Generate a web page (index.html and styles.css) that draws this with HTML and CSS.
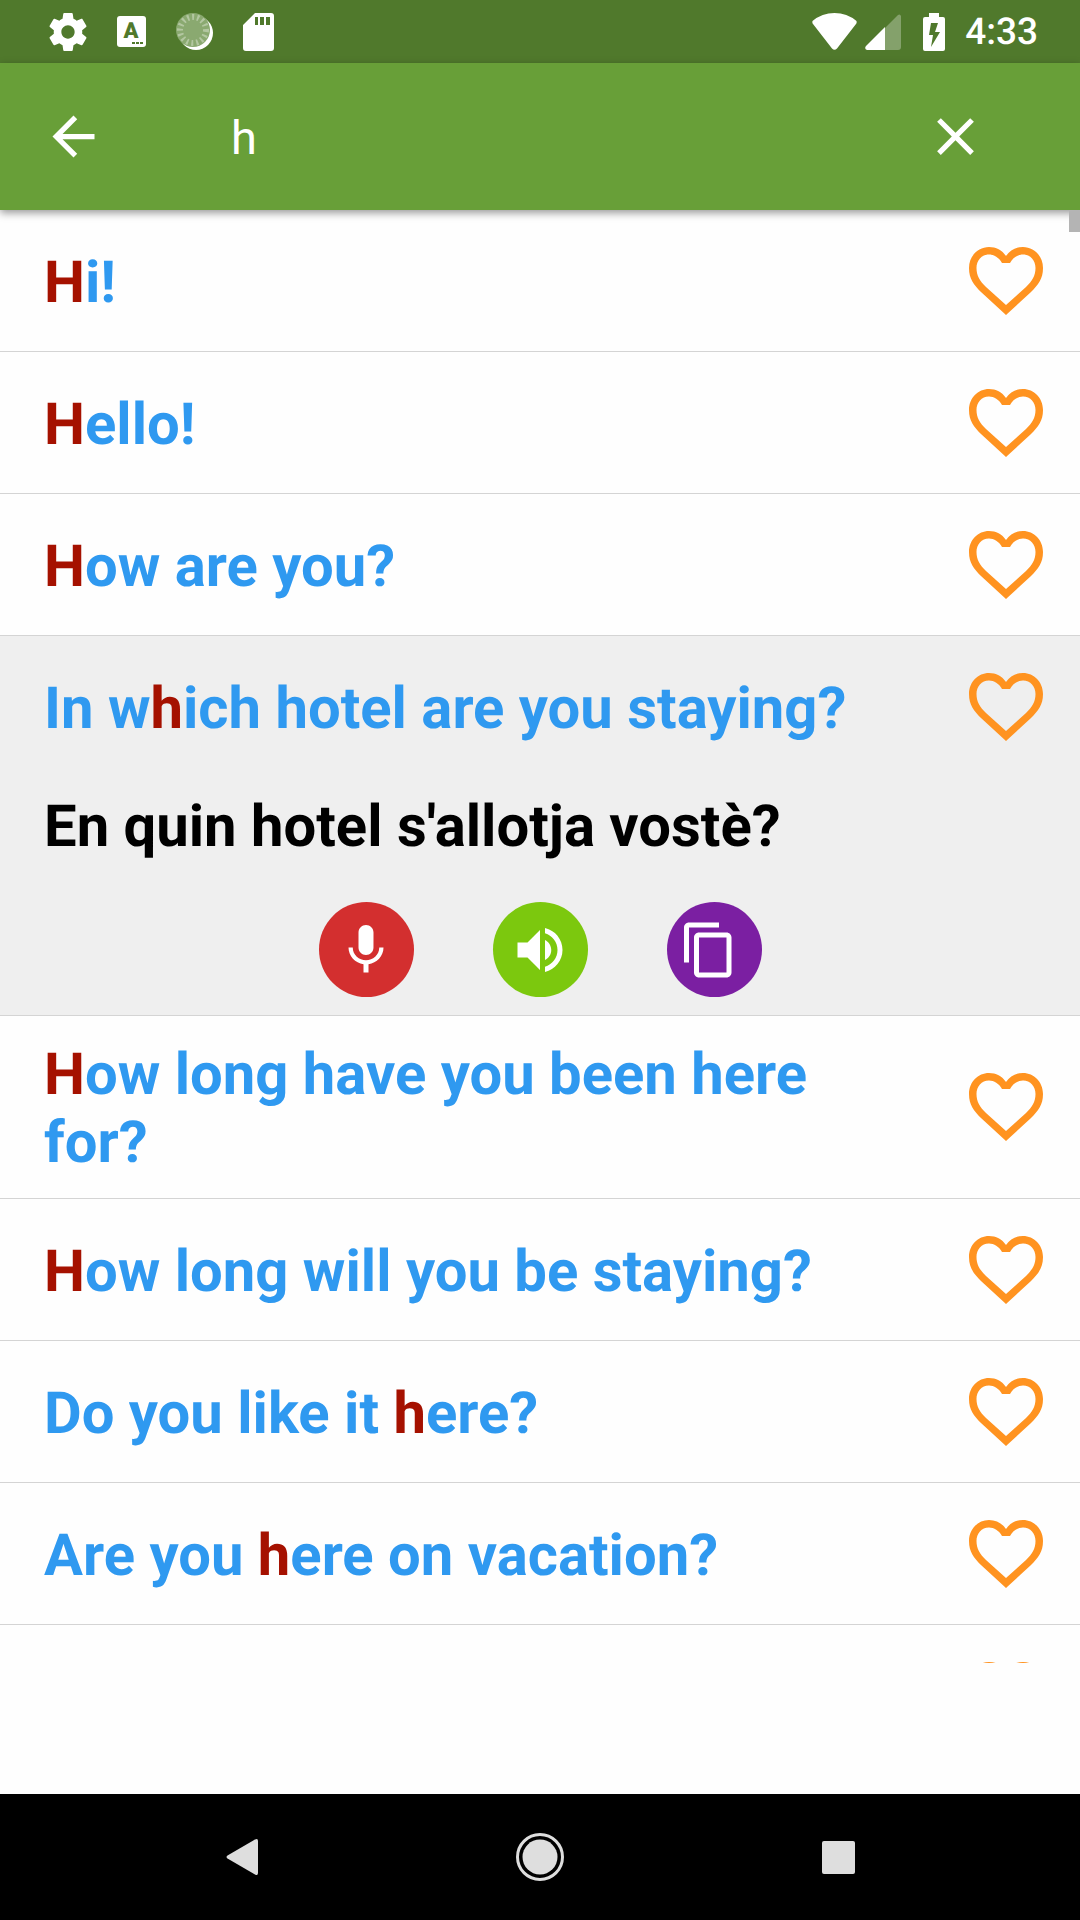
FILE: index.html
```html
<!DOCTYPE html>
<html lang="en">
<head>
<meta charset="utf-8">
<meta name="viewport" content="width=device-width, initial-scale=1">
<title>Phrase search</title>
<link rel="stylesheet" href="styles.css">
</head>
<body>
<svg class="defs" aria-hidden="true">
  <symbol id="heart" viewBox="0 0 74 68">
    <path fill-rule="evenodd" d="M37 9C33 3 27 0 20 0C9 0 0 9 0 21C0 32 5 38 12 45L37 68L62 45C69 38 74 32 74 21C74 9 65 0 54 0C47 0 41 3 37 9ZM33 16H41C44 10.500 49 7.500 54 7.500C61.500 7.500 66.500 13.500 66.500 21C66.500 29 63 34 57 40L37 58L17 40C11 34 7.500 29 7.500 21C7.500 13.500 12.500 7.500 20 7.500C25 7.500 30 10.500 33 16Z"/>
  </symbol>
</svg>

<div class="status">
  <div class="status-left">
    <svg width="38" height="38" viewBox="2 2 20 20"><path d="M19.430 12.980c.04-.32.07-.64.07-.98s-.03-.66-.07-.98l2.110-1.650c.19-.15.24-.42.12-.64l-2-3.460c-.12-.22-.39-.3-.61-.22l-2.490 1c-.52-.4-1.080-.73-1.690-.98l-.38-2.650C14.460 2.180 14.250 2 14 2h-4c-.25 0-.46.18-.49.42l-.38 2.650c-.61.25-1.170.59-1.690.98l-2.490-1c-.23-.09-.49 0-.61.22l-2 3.460c-.13.22-.07.49.12.64l2.110 1.650c-.04.32-.07.65-.07.98s.03.66.07.98l-2.110 1.650c-.19.15-.24.42-.12.64l2 3.460c.12.22.39.3.61.22l2.490-1c.52.4 1.080.73 1.690.98l.38 2.650c.03.24.24.42.49.42h4c.25 0 .46-.18.49-.42l.38-2.650c.61-.25 1.170-.59 1.690-.98l2.490 1c.23.09.49 0 .61-.22l2-3.460c.12-.22.07-.49-.12-.64l-2.110-1.650zM12 15.500c-1.930 0-3.500-1.570-3.500-3.500s1.570-3.500 3.500-3.500 3.500 1.570 3.500 3.500-1.570 3.500-3.500 3.500z"/></svg>
    <svg width="29" height="31" viewBox="0 0 29 31"><rect width="29" height="31" rx="3"/><text class="badge-letter" x="14" y="22" text-anchor="middle">A</text><path class="cut" d="M15 26h3v2h-3zM19 26h3v2h-3zM23 26h3v2h-3z"/></svg>
    <svg width="37" height="37" viewBox="0 0 37 37"><circle cx="20" cy="20" r="17"/><circle cx="17" cy="17" r="17" fill="#8aa970"/><circle cx="17" cy="17" r="13" fill="none" stroke="#b3c7a1" stroke-width="6" stroke-dasharray="2 3"/></svg>
    <svg width="31" height="38" viewBox="0 0 31 38"><path fill-rule="evenodd" d="M12 0H28q3 0 3 3V35q0 3-3 3H3q-3 0-3-3V12ZM12 4v8h3V4ZM17 4v8h4V4ZM23 4v8h4V4Z"/></svg>
  </div>
  <div class="status-right">
    <svg width="45" height="37" viewBox="0 0 45 37"><path d="M.5 8Q10 0 22.500 0T44.500 8Q45 10 44 11L25 35.500q-2.500 2.500-5 0L1 11Q0 10 .5 8Z"/></svg>
    <svg class="signal" width="36" height="36" viewBox="0 0 36 36"><path opacity=".3" d="M20 14L33 1q2-1.500 3 1V33q0 3-3 3H20Z"/><path d="M20 13V36H2q-3-1-1-4Z"/></svg>
    <svg width="22" height="38" viewBox="0 0 22 38"><path fill-rule="evenodd" d="M6 0H16V4H20q2 0 2 2V36q0 2-2 2H2q-2 0-2-2V6q0-2 2-2H6ZM8 10L6 22h4L8 34L17 19H12L15 10Z"/></svg>
    <span class="clock">4:33</span>
  </div>
</div>

<header class="toolbar">
  <button class="tool" type="button" aria-label="Back"><svg width="63" height="63" viewBox="0 0 24 24"><path d="M20 11H7.830l5.590-5.590L12 4l-8 8 8 8 1.410-1.410L7.830 13H20v-2z"/></svg></button>
  <input class="search" type="text" value="h" aria-label="Search">
  <button class="tool" type="button" aria-label="Clear"><svg width="63" height="63" viewBox="0 0 24 24"><path d="M19 6.410L17.590 5 12 10.590 6.410 5 5 6.410 10.590 12 5 17.590 6.410 19 12 13.410 17.590 19 19 17.590 13.410 12z"/></svg></button>
</header>

<main class="results">
  <ul class="list">
    <li class="item"><div class="row"><p class="phrase"><mark>H</mark>i!</p><button class="fav" type="button" aria-label="Favorite"><svg width="74" height="68"><use href="#heart"/></svg></button></div></li>
    <li class="item"><div class="row"><p class="phrase"><mark>H</mark>ello!</p><button class="fav" type="button" aria-label="Favorite"><svg width="74" height="68"><use href="#heart"/></svg></button></div></li>
    <li class="item"><div class="row"><p class="phrase"><mark>H</mark>ow are you?</p><button class="fav" type="button" aria-label="Favorite"><svg width="74" height="68"><use href="#heart"/></svg></button></div></li>
    <li class="item open">
      <div class="row"><p class="phrase">In w<mark>h</mark>ich hotel are you staying?</p><button class="fav" type="button" aria-label="Favorite"><svg width="74" height="68"><use href="#heart"/></svg></button></div>
      <p class="translation" lang="ca">En quin hotel s'allotja vostè?</p>
      <div class="actions">
        <button class="action record" type="button" aria-label="Record"><svg width="60" height="60" viewBox="0 0 24 24"><path d="M12 14c1.660 0 2.990-1.340 2.990-3L15 5c0-1.660-1.340-3-3-3S9 3.340 9 5v6c0 1.660 1.340 3 3 3zm5.300-3c0 3-2.540 5.100-5.300 5.100S6.700 14 6.700 11H5c0 3.410 2.720 6.230 6 6.720V21h2v-3.280c3.280-.48 6-3.300 6-6.720h-1.700z"/></svg></button>
        <button class="action listen" type="button" aria-label="Listen"><svg width="60" height="60" viewBox="0 0 24 24"><path d="M3 9v6h4l5 5V4L7 9H3zm13.500 3c0-1.770-1.020-3.290-2.500-4.030v8.050c1.480-.73 2.500-2.250 2.500-4.020zM14 3.230v2.060c2.890.86 5 3.540 5 6.710s-2.110 5.850-5 6.710v2.060c4.010-.91 7-4.490 7-8.770s-2.990-7.860-7-8.770z"/></svg></button>
        <button class="action copy" type="button" aria-label="Copy"><svg width="60" height="60" viewBox="2 0 24 24"><path d="M16 1H4c-1.100 0-2 .9-2 2v14h2V3h12V1zm3 4H8c-1.100 0-2 .9-2 2v14c0 1.100.9 2 2 2h11c1.100 0 2-.9 2-2V7c0-1.100-.9-2-2-2zm0 16H8V7h11v14z"/></svg></button>
      </div>
    </li>
    <li class="item"><div class="row"><p class="phrase"><mark>H</mark>ow long have you been here for?</p><button class="fav" type="button" aria-label="Favorite"><svg width="74" height="68"><use href="#heart"/></svg></button></div></li>
    <li class="item"><div class="row"><p class="phrase"><mark>H</mark>ow long will you be staying?</p><button class="fav" type="button" aria-label="Favorite"><svg width="74" height="68"><use href="#heart"/></svg></button></div></li>
    <li class="item"><div class="row"><p class="phrase">Do you like it <mark>h</mark>ere?</p><button class="fav" type="button" aria-label="Favorite"><svg width="74" height="68"><use href="#heart"/></svg></button></div></li>
    <li class="item"><div class="row"><p class="phrase">Are you <mark>h</mark>ere on vacation?</p><button class="fav" type="button" aria-label="Favorite"><svg width="74" height="68"><use href="#heart"/></svg></button></div></li>
    <li class="item"><div class="row"><p class="phrase"></p><button class="fav" type="button" aria-label="Favorite"><svg width="74" height="68"><use href="#heart"/></svg></button></div></li>
  </ul>
  <div class="thumb"></div>
</main>

<div class="banner"></div>

<nav class="navbar">
  <button class="nav" type="button" aria-label="Back"><svg width="32" height="38" viewBox="0 0 32 38"><path d="M29 1.500q3-1.500 3 1.500V35q0 3-3 1.500L1.500 20.500q-2-1.500 0-3Z"/></svg></button>
  <button class="nav" type="button" aria-label="Home"><svg width="48" height="48" viewBox="0 0 48 48"><circle cx="24" cy="24" r="17.500"/><circle cx="24" cy="24" r="22.500" fill="none" stroke="#dedede" stroke-width="3"/></svg></button>
  <button class="nav" type="button" aria-label="Overview"><svg width="33" height="33" viewBox="0 0 33 33"><rect width="33" height="33" rx="2"/></svg></button>
</nav>
</body>
</html>
```
FILE: styles.css
```css
* {
  box-sizing: border-box;
}

body {
  margin: 0;
  height: 100vh;
  display: flex;
  flex-direction: column;
  background: #fefefe;
  font-family: Roboto, "Liberation Sans", sans-serif;
  text-rendering: geometricPrecision;
}

button {
  display: flex;
  align-items: center;
  justify-content: center;
  padding: 0;
  border: 0;
  background: none;
}

svg {
  display: block;
  fill: currentColor;
}

.defs {
  position: absolute;
  width: 0;
  height: 0;
}

.status {
  flex: none;
  height: 63px;
  display: flex;
  align-items: center;
  justify-content: space-between;
  padding: 0 42px 0 49px;
  background: #50792c;
  color: #fff;
}

.status-left {
  display: flex;
  align-items: center;
  gap: 30px;
}

.status-right {
  display: flex;
  align-items: center;
}

.signal {
  margin: 0 22px 0 8px;
}

.clock {
  margin-left: 20px;
  padding-top: 2px;
  font-size: 37px;
  line-height: 44px;
  font-weight: 500;
}

.badge-letter {
  fill: #50792c;
  font-size: 22px;
  font-weight: 900;
}

.cut {
  fill: #50792c;
}

.toolbar {
  position: relative;
  z-index: 1;
  flex: none;
  height: 147px;
  display: flex;
  align-items: center;
  padding: 0 93px 0 42px;
  background: #689f38;
  color: #fff;
  box-shadow: 0 3px 8px rgba(0, 0, 0, 0.4);
}

.tool {
  flex: none;
  color: inherit;
}

.search {
  flex: 1;
  min-width: 0;
  margin-left: 126px;
  padding: 2px 0 0;
  border: 0;
  outline: 0;
  background: none;
  color: inherit;
  font: 400 47px/56px Roboto, "Liberation Sans", sans-serif;
}

.results {
  position: relative;
  flex: 1;
  min-height: 0;
  overflow: hidden;
}

.list {
  margin: 0;
  padding: 0;
  list-style: none;
}

.item {
  border-bottom: 1px solid #d4d4d4;
}

.open {
  background: #efefef;
}

.row {
  min-height: 141px;
  display: flex;
  align-items: center;
  padding: 0 37px 0 44px;
}

.phrase {
  flex: 1;
  margin: 0;
  padding: 25px 60px 21px 0;
  color: #2f99f0;
  font-size: 58px;
  line-height: 68px;
  font-weight: 700;
}

.phrase mark {
  background: none;
  color: #a51100;
}

.fav {
  flex: none;
  width: 109px;
  justify-content: flex-end;
  color: #ff9320;
}

.translation {
  margin: 0;
  padding: 16px 44px 41px;
  color: #000;
  font-size: 58px;
  line-height: 68px;
  font-weight: 700;
}

.actions {
  display: flex;
  justify-content: center;
  gap: 79px;
  padding-bottom: 18px;
}

.action {
  width: 95px;
  height: 95px;
  border-radius: 50%;
  color: #fff;
}

.record {
  background: #d32f2f;
}

.listen {
  background: #7cc80e;
}

.copy {
  background: #7b1fa2;
}

.thumb {
  position: absolute;
  z-index: 2;
  top: 0;
  right: 0;
  width: 11px;
  height: 22px;
  background: #b4b4b4;
}

.banner {
  flex: none;
  height: 131px;
}

.navbar {
  flex: none;
  height: 126px;
  display: flex;
  align-items: center;
  justify-content: center;
  gap: 198px;
  background: #000;
}

.nav {
  width: 100px;
  height: 100px;
  color: #dedede;
}
```
